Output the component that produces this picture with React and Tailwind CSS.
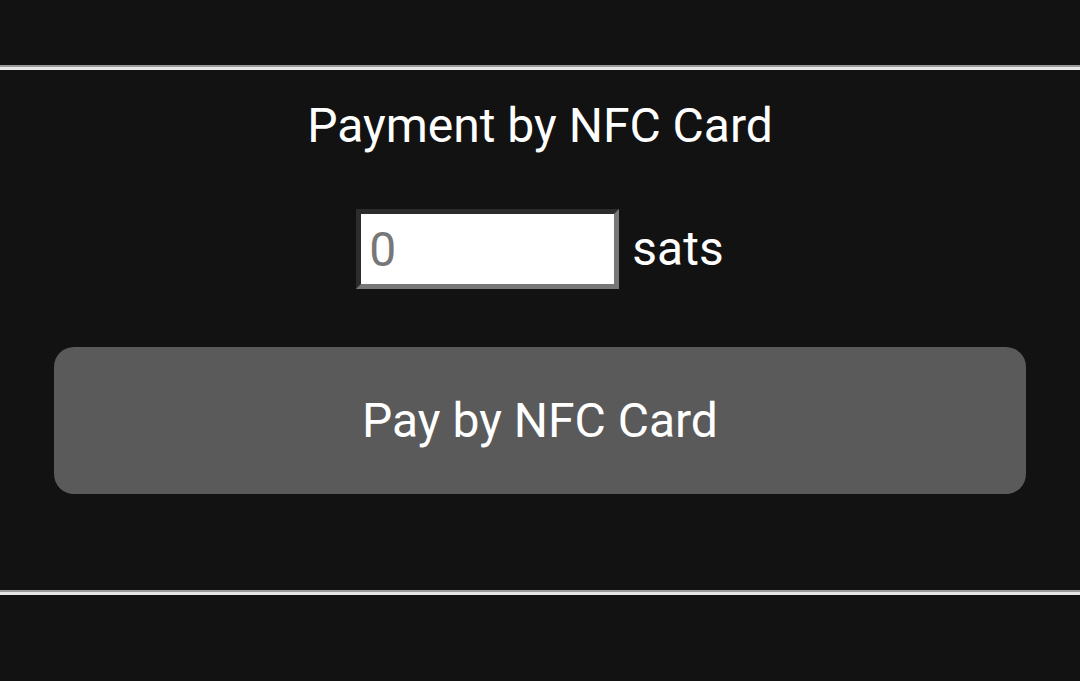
import React, { useState } from "react";

export default function App() {
  const [amount, setAmount] = useState("");

  return (
    <div className="w-full min-h-screen bg-[#121212] text-white font-['Roboto','Liberation_Sans',sans-serif] overflow-hidden h-[681px]">
      <div className="pt-[65px]">
        {/* Top divider */}
        <div className="h-[2px] bg-[#9a9a9a]"></div>
        <div className="h-[3px] bg-[#e6e6e6]"></div>

        {/* Card */}
        <div className="flex flex-col items-center">
          <h1 className="mt-[32px] text-[48px] leading-none">Payment by NFC Card</h1>

          <div className="mt-[59px] flex items-center gap-[13px]">
            <input
              type="number"
              placeholder="0"
              value={amount}
              onChange={(e) => setAmount(e.target.value)}
              className="w-[263px] h-[80px] bg-white text-black text-[48px] px-[8px] border-[5px] border-t-[#2c2c2c] border-l-[#2c2c2c] border-b-[#777777] border-r-[#777777] outline-none placeholder:text-[#777777]"
            />
            <span className="text-[48px] leading-none">sats</span>
          </div>
        </div>

        <div className="px-[54px] mt-[58px]">
          <button className="w-full h-[147px] rounded-[20px] bg-[#5a5a5a] text-white text-[48px]">
            Pay by NFC Card
          </button>
        </div>

        {/* Bottom divider */}
        <div className="mt-[96px] h-[2px] bg-[#9a9a9a]"></div>
        <div className="h-[3px] bg-[#e6e6e6]"></div>
      </div>
    </div>
  );
}
